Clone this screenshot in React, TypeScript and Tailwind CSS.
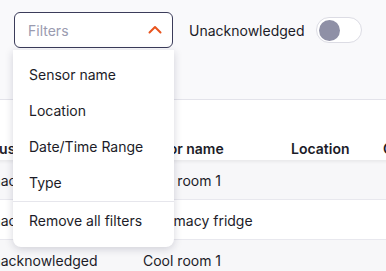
import React from 'react';

const rows = [
  { status: 'Unacknowledged', sensor: 'Cool room 1', location: '' },
  { status: 'Unacknowledged', sensor: 'Pharmacy fridge', location: '' },
  { status: 'Unacknowledged', sensor: 'Cool room 1', location: '' },
];

const filterOptions = ['Sensor name', 'Location', 'Date/Time Range', 'Type'];

const FilterMenu: React.FC = () => (
  <div className="absolute left-[-1px] top-[38px] z-10 w-[161px] rounded-b-lg bg-white shadow-[0_2px_8px_rgba(30,30,60,0.18)]">
    <ul className="pt-[6px]">
      {filterOptions.map((opt) => (
        <li key={opt} className="flex h-[36px] items-center px-[16px] text-[14px] text-[#1c1c28]">
          {opt}
        </li>
      ))}
    </ul>
    <div className="mt-[1px] flex h-[37px] items-center border-t border-[#e6e6ec] px-[16px] text-[14px] text-[#1c1c28]">
      Remove all filters
    </div>
    <div className="h-[9px]" />
  </div>
);

export default function App() {
  return (
    <div className="relative h-[271px] w-[386px] overflow-hidden bg-white font-['Inter',sans-serif]">
      <div className="flex h-[100px] items-start border-b border-[#e3e3ea] bg-[#f9f9fb] pl-[14px] pt-[12px]">
        <div className="relative w-[159px]">
          <div className="flex h-[36px] items-center justify-between rounded-md border-[1.5px] border-[#3b3c5a] bg-white pl-[13px] pr-[9px]">
            <span className="text-[14px] text-[#9a9bb0]">Filters</span>
            <svg width="16" height="16" viewBox="0 0 16 16" fill="none">
              <path d="M2.5 10.5 L8 5 L13.5 10.5" stroke="#e8541e" strokeWidth="2" strokeLinecap="round" strokeLinejoin="round" />
            </svg>
          </div>
          <FilterMenu />
        </div>
        <div className="ml-[16px] flex h-[36px] items-center gap-[11px]">
          <span className="text-[14px] text-[#1c1c28]">Unacknowledged</span>
          <div className="flex h-[26px] w-[46px] items-center rounded-full border border-[#dcdce4] bg-white pl-[2px]">
            <div className="h-[21px] w-[21px] rounded-full bg-[#8f90a6]" />
          </div>
        </div>
      </div>

      <div className="ml-[-34px] w-[480px]">
        <div className="relative flex h-[60px] items-end pb-[1px] text-[14px] font-semibold text-[#1c1c28] shadow-[0_2px_3px_rgba(0,0,0,0.06)]">
          <div className="w-[169px] shrink-0 pl-[6px] leading-[20px]">Status</div>
          <div className="w-[156px] shrink-0 leading-[20px]">Sensor name</div>
          <div className="w-[92px] shrink-0 leading-[20px]">Location</div>
          <div className="shrink-0 leading-[20px]">Created</div>
        </div>
        {rows.map((r, i) => (
          <div
            key={i}
            className={`flex h-[40px] items-center border-b border-[#e8e8ee] pt-[2px] text-[14px] text-[#1c1c28] ${i % 2 === 0 ? 'bg-[#f7f7f9]' : 'bg-white'}`}
          >
            <div className="w-[177px] shrink-0 pl-[16px]">{r.status}</div>
            <div className="w-[148px] shrink-0">{r.sensor}</div>
            <div className="w-[92px] shrink-0">{r.location}</div>
          </div>
        ))}
      </div>
    </div>
  );
}
